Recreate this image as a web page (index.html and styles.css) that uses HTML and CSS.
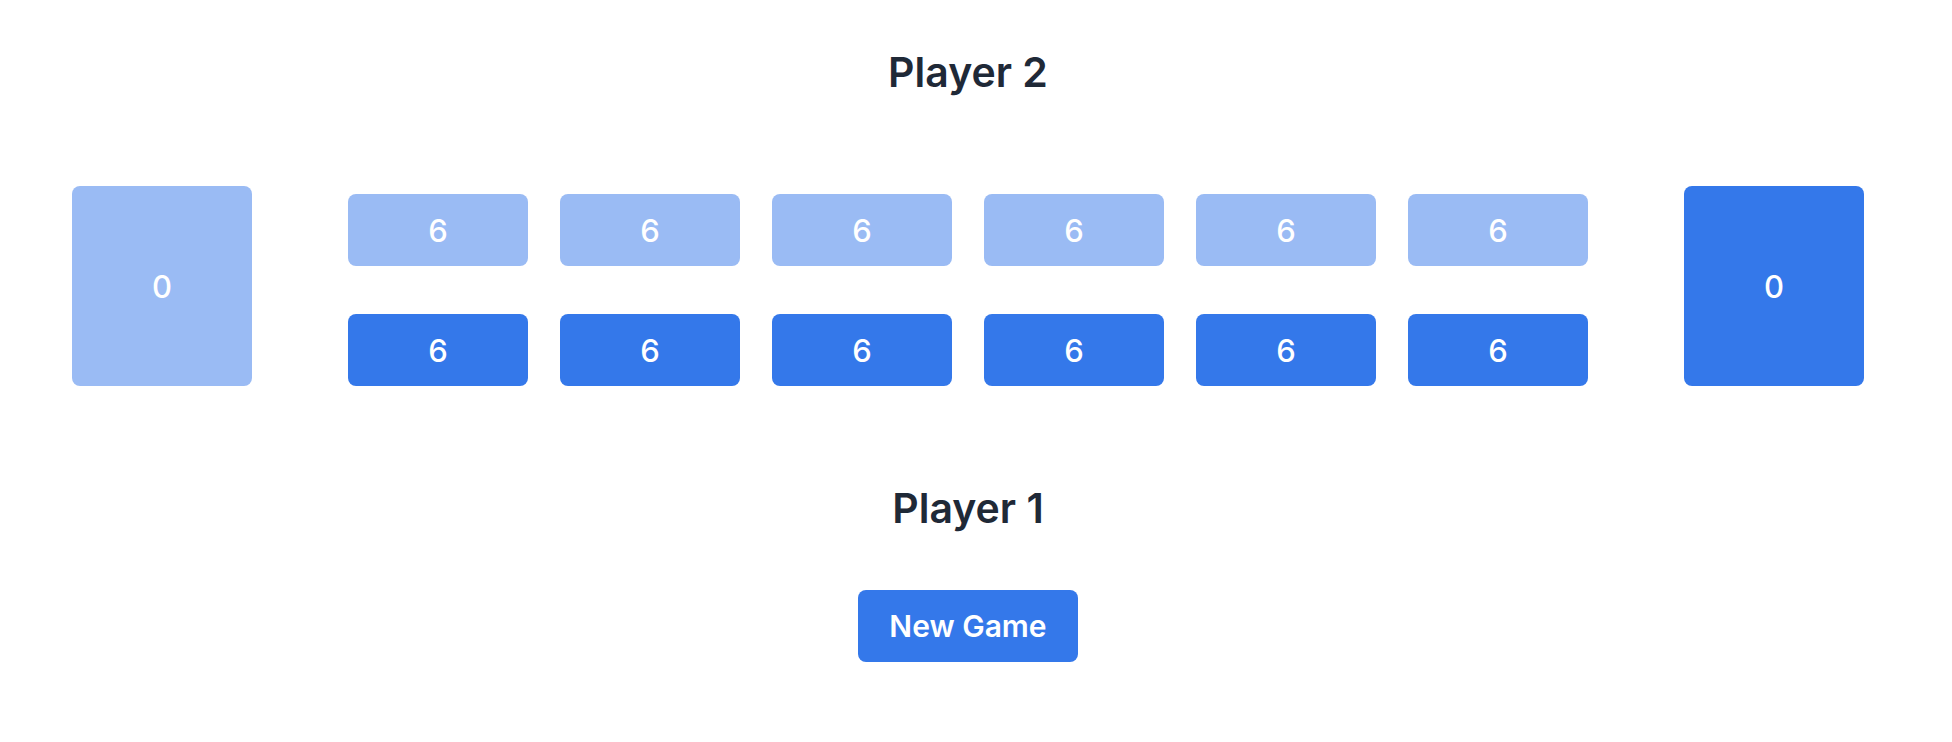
FILE: index.html
```html
<!DOCTYPE html>
<html lang="en">
<head>
<meta charset="utf-8">
<title>Mancala</title>
<link rel="stylesheet" href="styles.css">
</head>
<body>
<main class="app">
  <h2 class="player-title player-title--top">Player 2</h2>
  <section class="board">
    <div class="store store--p2">0</div>
    <div class="pits">
      <button class="pit pit--p2">6</button>
      <button class="pit pit--p2">6</button>
      <button class="pit pit--p2">6</button>
      <button class="pit pit--p2">6</button>
      <button class="pit pit--p2">6</button>
      <button class="pit pit--p2">6</button>
      <button class="pit pit--p1">6</button>
      <button class="pit pit--p1">6</button>
      <button class="pit pit--p1">6</button>
      <button class="pit pit--p1">6</button>
      <button class="pit pit--p1">6</button>
      <button class="pit pit--p1">6</button>
    </div>
    <div class="store store--p1">0</div>
  </section>
  <h2 class="player-title player-title--bottom">Player 1</h2>
  <button class="new-game">New Game</button>
</main>
</body>
</html>
```
FILE: styles.css
```css
html, body {
  margin: 0;
  background: #ffffff;
}
body {
  font-family: Inter, "Noto Sans", "Liberation Sans", sans-serif;
  color: #1f2937;
}
.app {
  display: flex;
  flex-direction: column;
  align-items: center;
  padding-right: 16px;
}
.player-title {
  margin: 0;
  font-size: 41px;
  line-height: 48px;
  font-weight: 600;
}
.player-title--top {
  margin-top: 48px;
}
.board {
  display: flex;
  align-items: flex-end;
  gap: 96px;
  margin-top: 90px;
}
.store {
  width: 180px;
  height: 200px;
  border-radius: 8px;
  display: flex;
  align-items: center;
  justify-content: center;
  color: #ffffff;
  font-size: 31px;
  font-weight: 500;
  background: #3478ea;
}
.store--p2 {
  background: #9abbf4;
}
.pits {
  display: grid;
  grid-template-columns: repeat(6, 180px);
  column-gap: 32px;
  row-gap: 48px;
}
.pit {
  width: 180px;
  height: 72px;
  border: 0;
  border-radius: 8px;
  padding: 0;
  font-family: inherit;
  font-size: 31px;
  font-weight: 500;
  color: #ffffff;
  background: #3478ea;
}
.pit--p2 {
  background: #9abbf4;
}
.player-title--bottom {
  margin-top: 98px;
}
.new-game {
  margin-top: 58px;
  width: 220px;
  height: 72px;
  border: 0;
  border-radius: 8px;
  padding: 0;
  font-family: inherit;
  font-size: 30px;
  font-weight: 600;
  color: #ffffff;
  background: #3478ea;
}
```
